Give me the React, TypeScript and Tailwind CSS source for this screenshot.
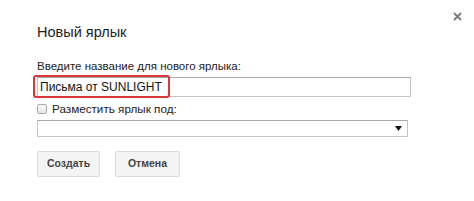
import React from "react";

export default function App() {
  return (
    <div
      className="relative w-[474px] h-[201px] bg-white overflow-hidden"
      style={{ fontFamily: '"Liberation Sans", Arial, sans-serif' }}
    >
      <button className="absolute left-[452px] top-[11px] w-[10px] h-[10px] flex items-center justify-center">
        <svg width="9" height="9" viewBox="0 0 9 9">
          <path d="M1 1 L8 8 M8 1 L1 8" stroke="#7a7a7a" strokeWidth="1.8" />
        </svg>
      </button>
      <div className="flex flex-col pl-[37px] pt-[22px]">
        <div className="h-[20px] leading-[20px] text-[14.5px] text-[#222]">Новый ярлык</div>
        <div className="mt-[17px] h-[14px] leading-[14px] text-[11.5px] text-[#222]">
          Введите название для нового ярлыка:
        </div>
        <div className="relative mt-[4px] w-[374px] h-[20px] border border-[#c4c4c4] border-t-[#a8a8a8] flex items-center pl-[2px] text-[12px] text-[#111]">
          Письма от SUNLIGHT
          <div className="absolute left-[-5px] top-[-3px] w-[137px] h-[23px] border-2 border-[#d8383c] rounded-[3px]" />
        </div>
        <div className="mt-[4px] h-[15px] flex items-center gap-[5px]">
          <div className="w-[10px] h-[10px] border border-[#aaa] rounded-[2px] bg-gradient-to-b from-[#fafafa] to-[#e6e6e6]" />
          <span className="text-[11.7px] leading-[15px] text-[#222]">Разместить ярлык под:</span>
        </div>
        <div className="mt-[4px] w-[371px] h-[17px] border border-[#c4c4c4] border-t-[#a8a8a8] flex items-center justify-end pr-[5px]">
          <svg width="7" height="5" viewBox="0 0 7 5">
            <path d="M0 0 L7 0 L3.5 5 Z" fill="#111" />
          </svg>
        </div>
        <div className="mt-[14px] flex gap-[15px]">
          <button className="w-[63px] h-[26px] bg-[#f4f4f4] border border-[#dadada] rounded-[2px] text-[10.5px] font-bold text-[#444]">
            Создать
          </button>
          <button className="w-[65px] h-[26px] bg-[#f4f4f4] border border-[#dadada] rounded-[2px] text-[10.5px] font-bold text-[#444]">
            Отмена
          </button>
        </div>
      </div>
    </div>
  );
}
